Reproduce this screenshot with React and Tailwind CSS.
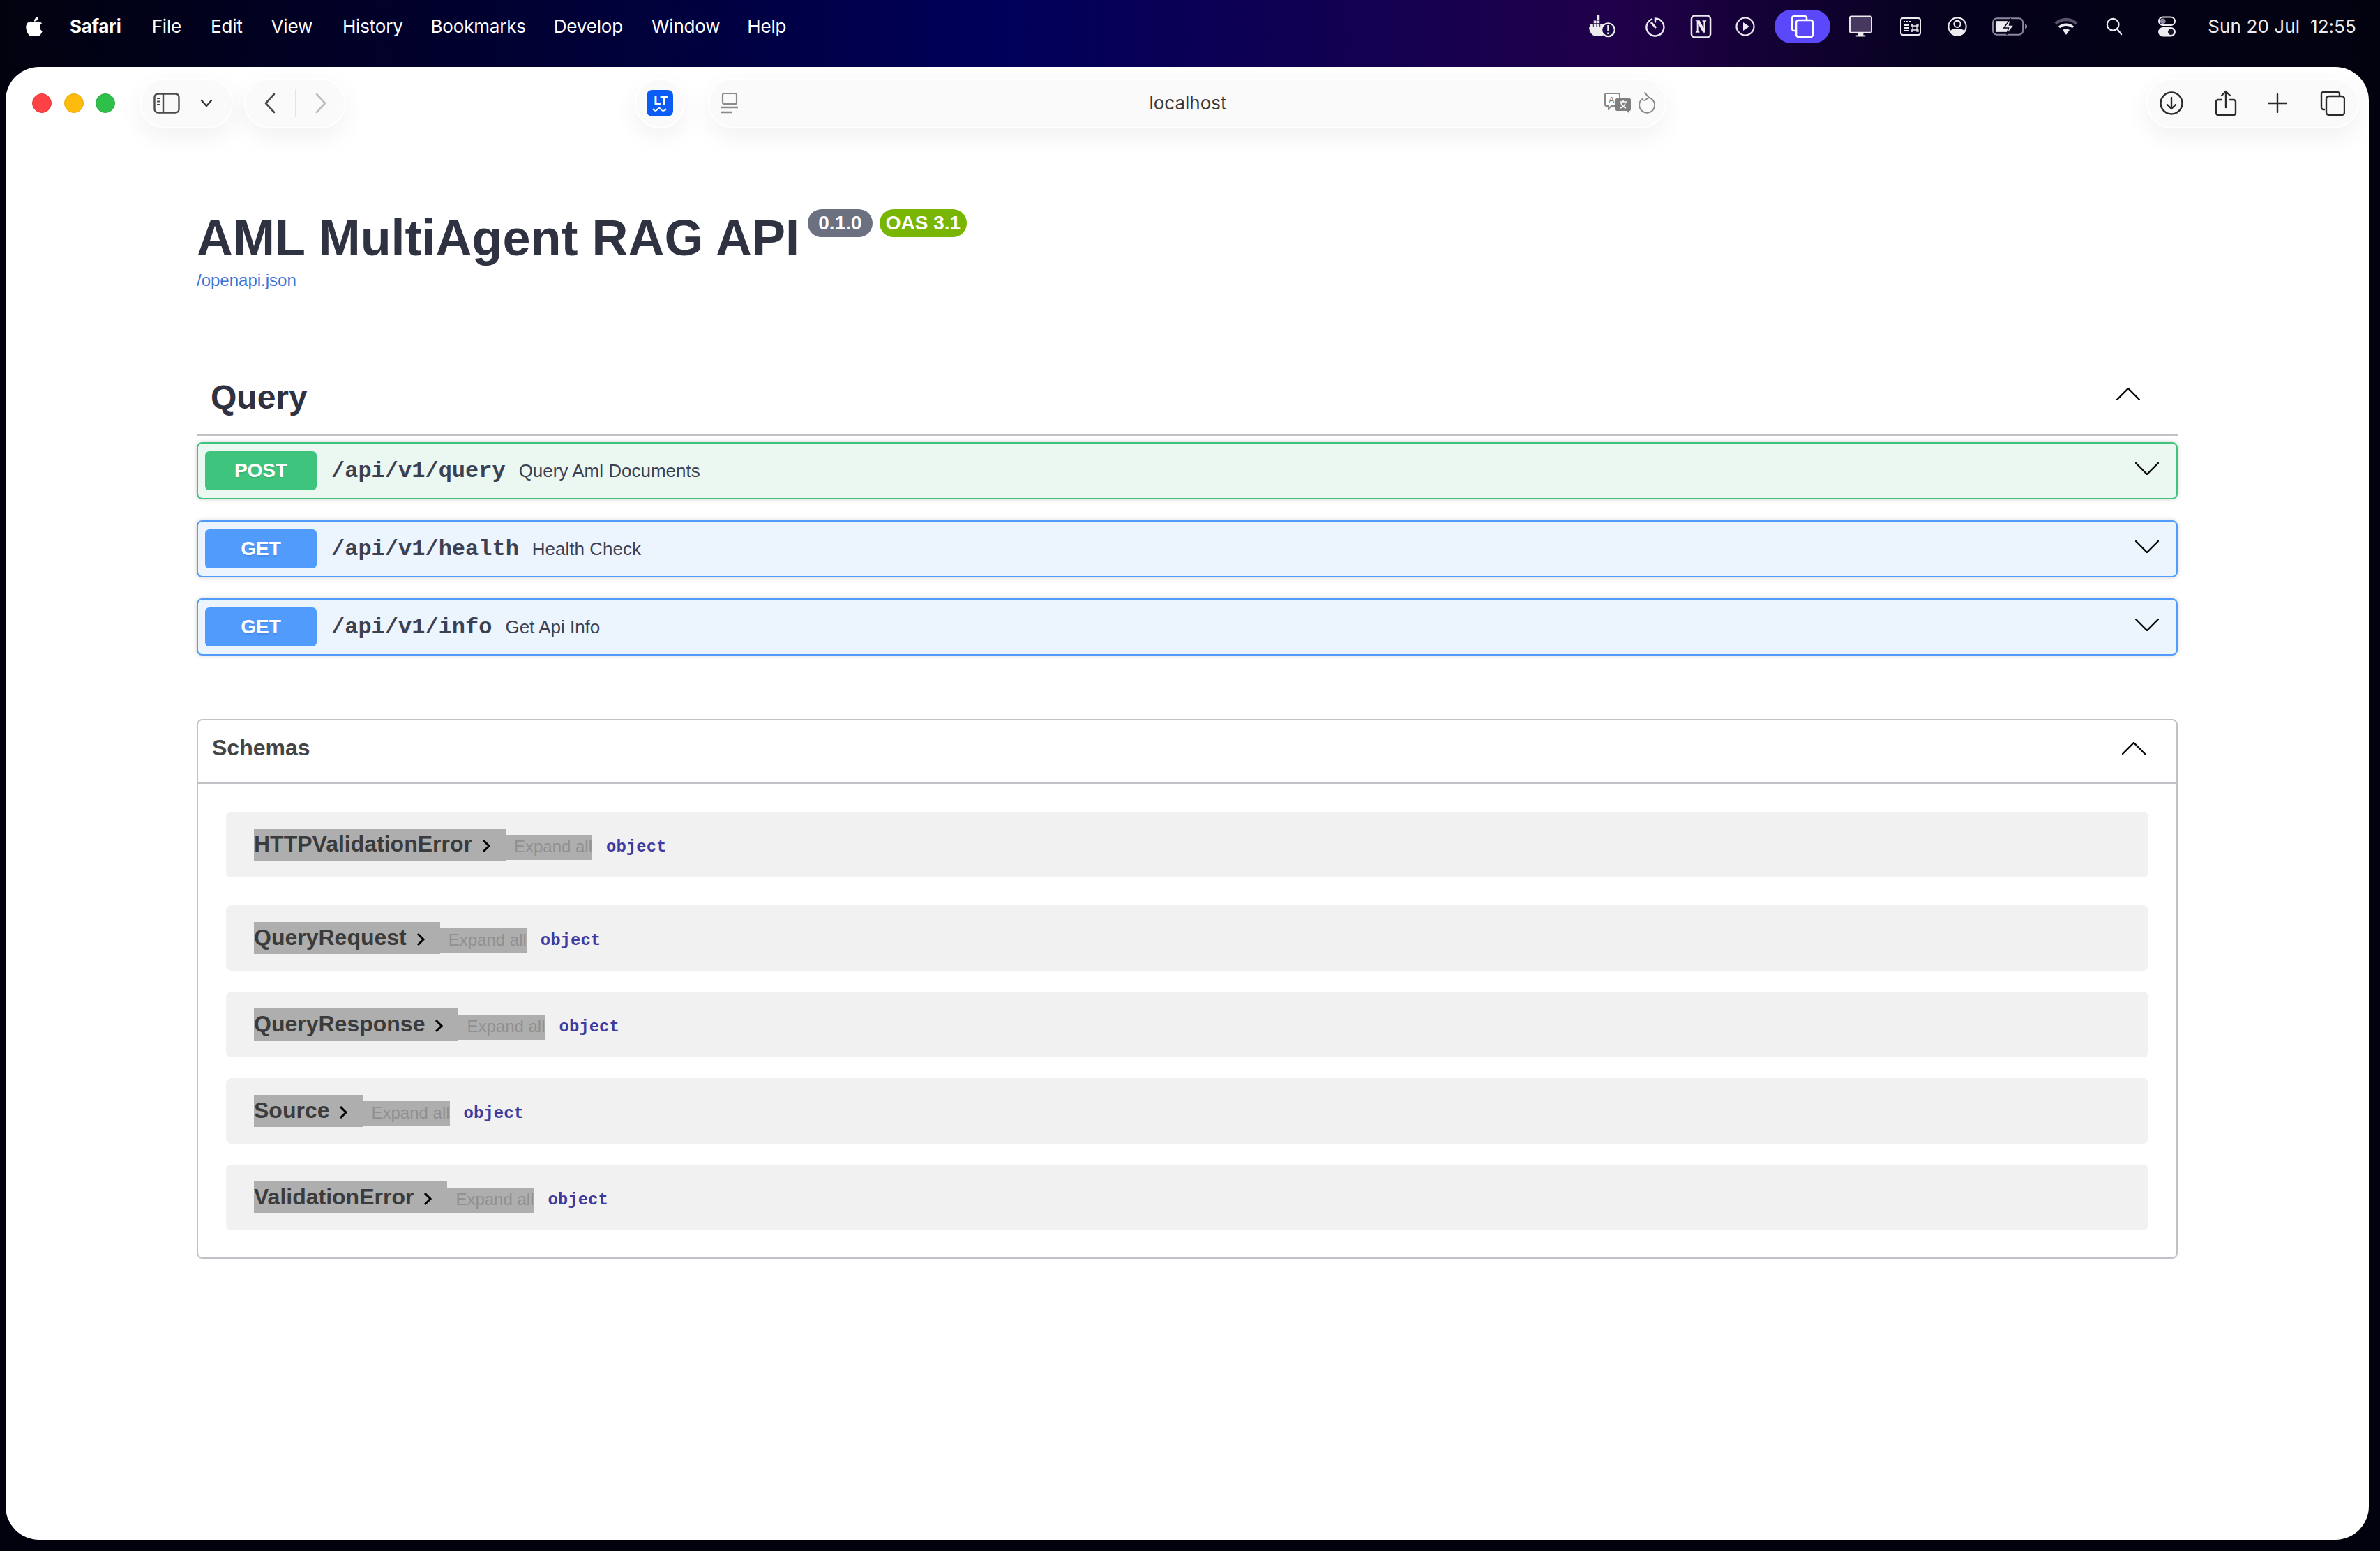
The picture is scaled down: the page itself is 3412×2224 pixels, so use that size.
import React from "react";
import { FaApple } from "react-icons/fa";

const menus = [
	["File", "ml-[44px]"],
	["Edit", "ml-[42px]"],
	["View", "ml-[41px]"],
	["History", "ml-[43px]"],
	["Bookmarks", "ml-[40px]"],
	["Develop", "ml-[40px]"],
	["Window", "ml-[41px]"],
	["Help", "ml-[39px]"],
];

const ops = [
	{ method: "POST", path: "/api/v1/query", summary: "Query Aml Documents", box: "border-[#3fc47e] bg-[#ebf7f1]", btn: "bg-[#3fc47e]" },
	{ method: "GET", path: "/api/v1/health", summary: "Health Check", box: "border-[#519bfd] bg-[#ecf4fe]", btn: "bg-[#519bfd]" },
	{ method: "GET", path: "/api/v1/info", summary: "Get Api Info", box: "border-[#519bfd] bg-[#ecf4fe]", btn: "bg-[#519bfd]" },
];

const schemas = [
	{ name: "HTTPValidationError", row: "mb-[40px]" },
	{ name: "QueryRequest", row: "mb-[30px]" },
	{ name: "QueryResponse", row: "mb-[30px]" },
	{ name: "Source", row: "mb-[30px]" },
	{ name: "ValidationError", row: "mb-[39px]" },
];

const Chevron = ({ up, className }) => (
	<svg viewBox="0 0 34 18" className={className} fill="none" stroke="#0a0a0a" strokeWidth="2.4" strokeLinecap="round">
		<path d={up ? "M1 17 17 1l16 16" : "M1 1l16 16L33 1"} />
	</svg>
);

// Right side of the menu bar
const StatusIcons = () => (
	<div className="ml-auto flex items-center text-[#ecebf0]">
		<svg viewBox="0 0 40 34" className="w-[38px] h-[32px]" fill="currentColor">
			<path d="M12 0h4v7h-4zM7 8h4v4H7zM12 8h4v4h-4zM2 13h4v4H2zM7 13h4v4H7zM12 13h4v4h-4zM17 13h4v4h-4zM0 18h20c-1 5 0 9 2 12-2 1-6 2-9 2C5 32 0 26 0 18z" />
			<circle cx="29" cy="22" r="10" fill="#1a0a45" stroke="currentColor" strokeWidth="2.400" />
			<path d="M27.700 15h2.800v9h-2.800zM27.700 26h2.800v2.800h-2.800z" />
		</svg>
		<svg viewBox="0 0 28 30" className="ml-[43px] w-[28px] h-[30px]" fill="none" stroke="currentColor" strokeWidth="2.400">
			<path d="M9 4.500A12.500 12.500 0 1 0 14 3.500v5" strokeLinecap="round" />
			<path d="M8 9l7 8" strokeWidth="3" />
		</svg>
		<svg viewBox="0 0 32 36" className="ml-[36px] w-[31px] h-[36px]" fill="none">
			<rect x="2" y="2" width="28" height="32" rx="5" stroke="currentColor" strokeWidth="2.600" />
			<path d="M8 9h6l6 11V11l-2-1V9h6v1l-2 1v16h-3l-7-13v10l2 2v1H8v-1l2-2V10L8 9.800z" fill="currentColor" />
		</svg>
		<svg viewBox="0 0 28 28" className="ml-[34px] w-[28px] h-[28px]" fill="none" stroke="currentColor" strokeWidth="2.200">
			<circle cx="14" cy="14" r="12.500" />
			<path d="M11 8l9 6-9 6z" fill="currentColor" stroke="none" />
		</svg>
		<div className="ml-[28px] w-[80px] h-[48px] rounded-[24px] bg-[#5b48fb] flex items-center justify-center">
			<svg viewBox="0 0 34 34" className="w-[34px] h-[34px]" fill="none" stroke="#fff" strokeWidth="2.600">
				<path d="M7 23H5a3 3 0 0 1-3-3V5a3 3 0 0 1 3-3h15a3 3 0 0 1 3 3v2" />
				<rect x="8" y="8" width="24" height="24" rx="3.500" />
			</svg>
		</div>
		<svg viewBox="0 0 34 32" className="ml-[27px] w-[33px] h-[32px]">
			<rect x="1" y="1" width="32" height="24" rx="2" fill="#47385f" stroke="#ecebf0" strokeWidth="2" />
			<path d="M13 26h8v3h3v2H10v-2h3z" fill="#ecebf0" />
		</svg>
		<svg viewBox="0 0 30 26" className="ml-[40px] w-[30px] h-[26px]" fill="none" stroke="currentColor">
			<rect x="1" y="1" width="28" height="24" rx="3" strokeWidth="2" />
			<path d="M5 6h2M9 6h2M13 6h2M5 11h8M5 15h8M5 19h8" strokeWidth="2" />
			<path d="M18 12h6v6h-6zM18 12h-2v-2h2zM24 12v-2h2v2zM18 18v2h-2v-2zM24 18h2v2h-2z" strokeWidth="1.300" />
		</svg>
		<svg viewBox="0 0 30 32" className="ml-[38px] w-[28px] h-[30px]" fill="none" stroke="currentColor" strokeWidth="2.200">
			<circle cx="15" cy="16" r="13.500" />
			<circle cx="15" cy="12" r="5" />
			<path d="M4 24c4-5 18-5 22 0-4 7-18 7-22 0z" fill="currentColor" />
		</svg>
		<svg viewBox="0 0 52 26" className="ml-[36px] w-[51px] h-[26px]">
			<rect x="1" y="1" width="44" height="24" rx="6" fill="none" stroke="#8d88a0" strokeWidth="2" />
			<path d="M5 5h21v16H5z" fill="#ecebf0" />
			<path d="M48 9c2 1 3 2 3 4s-1 3-3 4z" fill="#8d88a0" />
			<path d="M27 1l-10 14h7l-3 10 11-14h-7z" fill="#ecebf0" stroke="#090818" strokeWidth="1.500" />
		</svg>
		<svg viewBox="0 0 34 26" className="ml-[38px] w-[34px] h-[26px]" fill="none">
			<path d="M2 9c8-8 22-8 30 0" stroke="#55516a" strokeWidth="4.500" />
			<path d="M7 14c6-5 14-5 20 0" stroke="#ecebf0" strokeWidth="3.500" />
			<path d="M12 18c3-2 7-2 10 0l-5 7z" fill="#ecebf0" />
		</svg>
		<svg viewBox="0 0 26 28" className="ml-[40px] w-[24px] h-[26px]" fill="none" stroke="currentColor" strokeWidth="2.400" strokeLinecap="round">
			<circle cx="11" cy="11" r="9" />
			<path d="M17.500 18l6.500 8" />
		</svg>
		<svg viewBox="0 0 26 30" className="ml-[51px] w-[25px] h-[30px]">
			<rect x="1" y="1" width="24" height="12" rx="6" fill="none" stroke="#ecebf0" strokeWidth="2" />
			<circle cx="7" cy="7" r="4" fill="#8d88a0" />
			<rect y="16" width="26" height="14" rx="7" fill="#ecebf0" />
			<circle cx="19" cy="23" r="4.500" fill="#171528" />
		</svg>
		<span className="ml-[46px] mr-[34px] text-[26px] leading-none text-[#ecebf0] whitespace-pre font-['Inter',sans-serif] tracking-[0.1px]">Sun 20 Jul  12:55</span>
	</div>
);

const Pill = ({ className, children }) => (
	<div className={`h-[72px] rounded-[36px] bg-[#fafafa] border-2 border-white shadow-[0_12px_36px_rgba(0,0,0,0.06)] flex items-center ${className}`}>
		{children}
	</div>
);

const Toolbar = () => (
	<div className="flex items-center h-[72px] mt-[16px] pl-[38px] pr-[14px]">
		<div className="flex gap-[17.5px]">
			<div className="w-[28px] h-[28px] rounded-full bg-[#ff4245] border border-[#e03a3d]" />
			<div className="w-[28px] h-[28px] rounded-full bg-[#fdbb0c] border border-[#e5a80a]" />
			<div className="w-[28px] h-[28px] rounded-full bg-[#2fc04a] border border-[#28a940]" />
		</div>
		<Pill className="ml-[35px] w-[134px] pl-[18px]">
			<svg viewBox="0 0 38 30" className="w-[38px] h-[30px]" fill="none" stroke="#4a4a4a" strokeWidth="2.400">
				<rect x="1.500" y="1.500" width="35" height="27" rx="5" />
				<path d="M14 2v26" />
				<path d="M5 8h5M5 12.500h5M5 17h5" strokeWidth="2" />
			</svg>
			<svg viewBox="0 0 18 12" className="ml-[29px] w-[18px] h-[12px]" fill="none" stroke="#333" strokeWidth="2.400" strokeLinecap="round">
				<path d="M2 2l7 8 7-8" />
			</svg>
		</Pill>
		<Pill className="ml-[16px] w-[146px]">
			<svg viewBox="0 0 16 30" className="ml-[27px] w-[16px] h-[30px]" fill="none" stroke="#4a4a4a" strokeWidth="2.600" strokeLinecap="round" strokeLinejoin="round">
				<path d="M14 2L2 15l12 13" />
			</svg>
			<div className="ml-[28px] w-[2px] h-[40px] bg-[#e4e4e4]" />
			<svg viewBox="0 0 16 30" className="ml-[27px] w-[16px] h-[30px]" fill="none" stroke="#bdbdbd" strokeWidth="2.600" strokeLinecap="round" strokeLinejoin="round">
				<path d="M2 2l12 13L2 28" />
			</svg>
		</Pill>
		<Pill className="ml-[414px] w-[72px] justify-center">
			<div className="w-[38px] h-[38px] rounded-[8px] bg-[#0a5cf5] flex flex-col items-center justify-center text-white">
				<span className="text-[19px] leading-[17px] font-bold font-['Liberation_Mono',monospace] tracking-[-2px]">LT</span>
				<svg viewBox="0 0 24 6" className="w-[22px] h-[6px]" fill="none" stroke="#fff" strokeWidth="2">
					<path d="M1 2c3 4 5 4 7 1s4-3 6 0 5 3 8-1" />
				</svg>
			</div>
		</Pill>
		<Pill className="ml-[33px] w-[1374px] relative">
			<svg viewBox="0 0 24 30" className="ml-[17px] w-[24px] h-[30px]" fill="none" stroke="#8a8a8a" strokeWidth="2.200">
				<rect x="2" y="1" width="20" height="15" rx="2" />
				<path d="M0 21h24M0 28h16" strokeWidth="2.600" />
			</svg>
			<span className="absolute left-[2px] right-0 text-center text-[26px] leading-none text-[#3a3a3a] font-['Inter',sans-serif]">localhost</span>
			<svg viewBox="0 0 38 30" className="ml-auto w-[38px] h-[30px]">
				<path d="M3 1h17a2 2 0 0 1 2 2v14a2 2 0 0 1-2 2H10l-4 4v-4H3a2 2 0 0 1-2-2V3a2 2 0 0 1 2-2z" fill="#fff" stroke="#8a8a8a" strokeWidth="2" />
				<text x="6" y="15" fontSize="13" fill="#777" fontFamily="Liberation Sans">A</text>
				<path d="M18 8h18a2 2 0 0 1 2 2v14a2 2 0 0 1-2 2v4l-4-4H18a2 2 0 0 1-2-2V10a2 2 0 0 1 2-2z" fill="#7f7f7f" />
				<path d="M22 13h10M27 11v2M24 15c1 4 4 6 7 7M30 15c-1 4-4 6-7 7" stroke="#fff" strokeWidth="1.500" fill="none" />
			</svg>
			<svg viewBox="0 0 26 34" className="ml-[9px] mr-[14px] w-[26px] h-[34px]" fill="none" stroke="#8a8a8a" strokeWidth="2" strokeLinecap="round">
				<path d="M17 9A11 11 0 1 1 8 10.500" />
				<path d="M11 2l6 7-7 4" />
			</svg>
		</Pill>
		<Pill className="ml-auto w-[305px]">
			<svg viewBox="0 0 34 34" className="ml-[17px] w-[34px] h-[34px]" fill="none" stroke="#2a2a2a" strokeWidth="2.400" strokeLinecap="round" strokeLinejoin="round">
				<circle cx="17" cy="17" r="15.500" />
				<path d="M17 9v16M11 19l6 6 6-6" />
			</svg>
			<svg viewBox="0 0 32 38" className="ml-[45px] w-[32px] h-[38px]" fill="none" stroke="#2a2a2a" strokeWidth="2.400" strokeLinecap="round" strokeLinejoin="round">
				<path d="M10 14H5a3 3 0 0 0-3 3v16a3 3 0 0 0 3 3h22a3 3 0 0 0 3-3V17a3 3 0 0 0-3-3h-5" />
				<path d="M16 25V2M10 8l6-6 6 6" />
			</svg>
			<svg viewBox="0 0 28 28" className="ml-[44px] w-[28px] h-[28px]" fill="none" stroke="#2a2a2a" strokeWidth="2.400" strokeLinecap="round">
				<path d="M14 1v26M1 14h26" />
			</svg>
			<svg viewBox="0 0 36 36" className="ml-[47px] w-[36px] h-[36px]" fill="none" stroke="#2a2a2a" strokeWidth="2.400">
				<path d="M7 27H5a3 3 0 0 1-3-3V5a3 3 0 0 1 3-3h20a3 3 0 0 1 3 3v2" />
				<rect x="9" y="8" width="26" height="27" rx="4" />
			</svg>
		</Pill>
	</div>
);

const OpBlock = ({ op }) => (
	<div className={`h-[82px] mb-[30px] border-2 rounded-[8px] shadow-[0_0_6px_rgba(0,0,0,0.19)] flex items-center pl-[10px] pr-[25px] ${op.box}`}>
		<div className={`w-[160px] h-[56px] rounded-[6px] flex items-center justify-center text-white text-[28px] font-bold [text-shadow:0_2px_0_rgba(0,0,0,0.1)] ${op.btn}`}>
			{op.method}
		</div>
		<span className="ml-[21px] mt-[2px] text-[32px] font-bold leading-none text-[#3b4151] font-['Liberation_Mono',monospace]">{op.path}</span>
		<span className="ml-[19px] text-[26px] leading-none text-[#3b4151]">{op.summary}</span>
		<Chevron className="ml-auto mb-[6px] w-[34px] h-[18px]" />
	</div>
);

const SchemaRow = ({ schema }) => (
	<div className={`h-[94px] mx-[40px] rounded-[8px] bg-[#f1f1f1] flex items-center pl-[40px] ${schema.row}`}>
		<div className="h-[46px] bg-[#aeaeae] flex items-center">
			<span className="-mt-[2px] text-[32px] font-bold leading-none text-[#3b3b3b]">{schema.name}</span>
			<svg viewBox="0 0 13 20" className="ml-[14px] mr-[21px] mt-[4px] w-[13px] h-[20px]" fill="none" stroke="#000" strokeWidth="3">
				<path d="M2 2l8 8-8 8" />
			</svg>
		</div>
		<div className="h-[36px] mt-[8px] pl-[12px] pb-[3px] bg-[#aeaeae] flex items-center text-[24px] leading-none text-[#909090]">Expand all</div>
		<span className="ml-[20px] mt-[7px] text-[24px] font-bold leading-none text-[#3f3a9e] font-['Liberation_Mono',monospace]">object</span>
	</div>
);

const App = () => {
	return (
		<div className="h-[2224px] overflow-hidden bg-[#02020f] bg-[linear-gradient(90deg,#02020f_0%,#000040_30%,#00005a_42%,#20004a_68%,#05021c_82%,#02020f_100%)] bg-[length:100%_96px] bg-no-repeat font-['Liberation_Sans',sans-serif]">
			<div className="h-[96px] flex items-center pl-[34px] pb-[20px] text-white">
				<FaApple className="w-[30px] h-[32px] text-white" />
				<span className="ml-[36px] text-[26px] leading-none font-bold font-['Inter',sans-serif] tracking-[-0.2px]">Safari</span>
				{menus.map(([label, gap]) => (
					<span key={label} className={`${gap} text-[26px] leading-none font-['Inter',sans-serif] tracking-[-0.2px]`}>{label}</span>
				))}
				<StatusIcons />
			</div>
			<div className="ml-[8px] mr-[16px] h-[2112px] rounded-[48px] bg-white overflow-hidden flex flex-col">
				<Toolbar />
				<main className="px-[274px] pt-[121px]">
					<div className="flex items-start">
						<h1 className="text-[72px] font-bold leading-none text-[#2f3241]">AML MultiAgent RAG API</h1>
						<span className="ml-[12px] -mt-[5px] w-[93px] h-[40px] rounded-[20px] bg-[#6b7180] text-white text-[28px] font-bold leading-[40px] text-center">0.1.0</span>
						<span className="ml-[10px] -mt-[5px] w-[125px] h-[40px] rounded-[20px] bg-[#78b505] text-white text-[28px] font-bold leading-[40px] text-center">OAS 3.1</span>
					</div>
					<a className="block mt-[9px] text-[24px] leading-[32px] text-[#3b74d8]">/openapi.json</a>
					<div className="mt-[128px] h-[79px] pl-[20px] pr-[54px] border-b-[3px] border-[#c1c1c8] flex items-start justify-between">
						<h3 className="text-[48px] font-bold leading-none text-[#2f3241]">Query</h3>
						<Chevron up className="mt-[10px] w-[34px] h-[18px]" />
					</div>
					<div className="mt-[9px]">
						{ops.map((op) => (
							<OpBlock key={op.path} op={op} />
						))}
					</div>
					<div className="mt-[91px] border-2 border-[#c1c1c8] rounded-[8px]">
						<div className="h-[91px] pb-[11px] pl-[20px] pr-[44px] border-b-2 border-[#c1c1c8] flex items-center justify-between">
							<span className="text-[32px] font-bold leading-none text-[#444]">Schemas</span>
							<Chevron up className="mt-[2px] w-[34px] h-[18px]" />
						</div>
						<div className="pt-[40px]">
							{schemas.map((schema) => (
								<SchemaRow key={schema.name} schema={schema} />
							))}
						</div>
					</div>
				</main>
			</div>
		</div>
	);
};

export default App;
